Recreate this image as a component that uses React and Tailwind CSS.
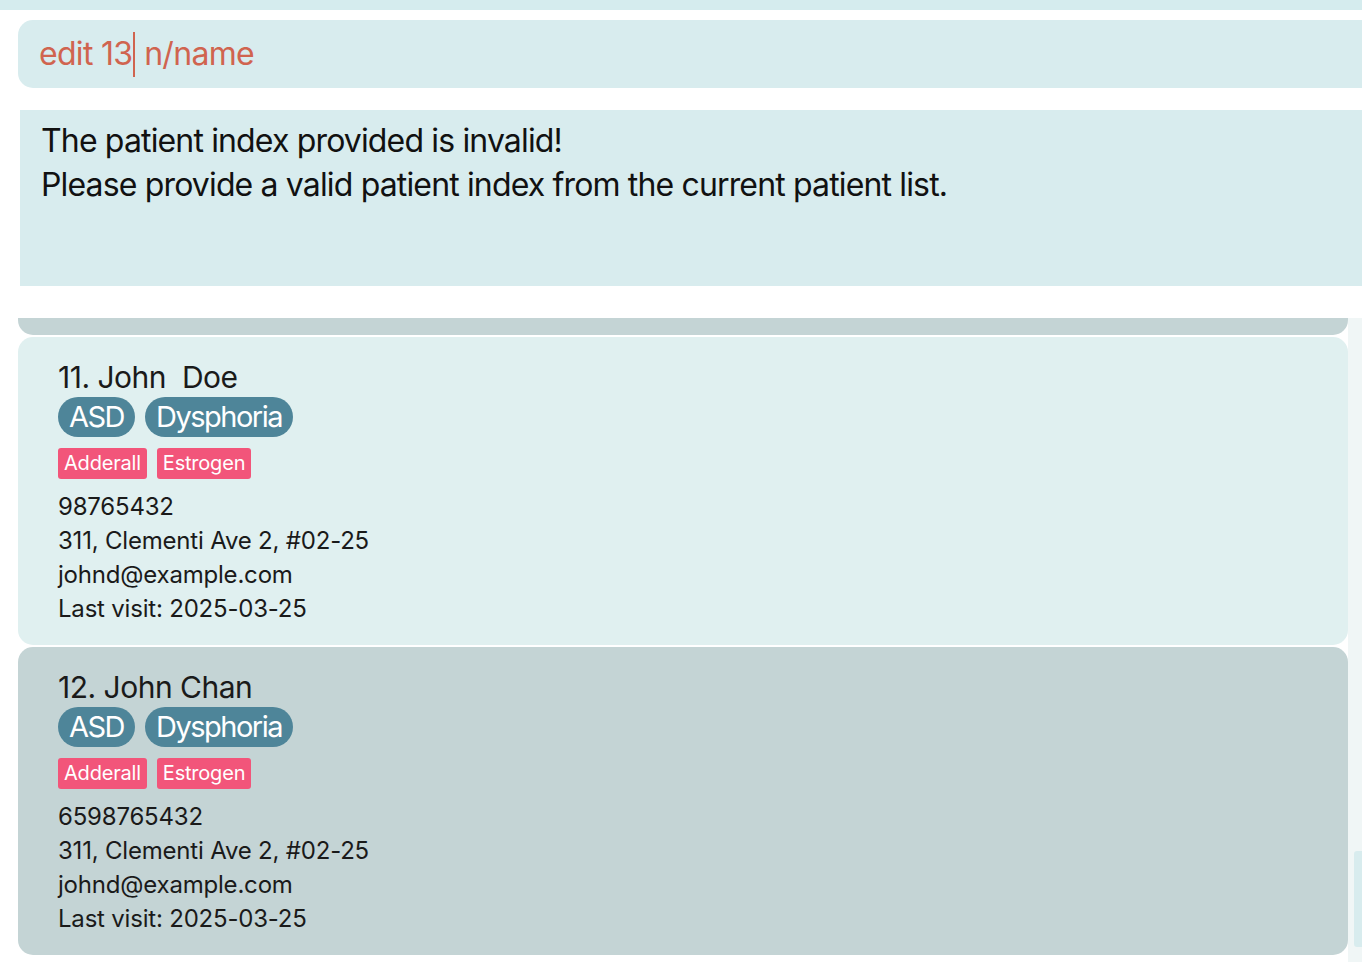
const patients = [
  { idx: 11, name: 'John  Doe', phone: '98765432', selected: false },
  { idx: 12, name: 'John Chan', phone: '6598765432', selected: true },
];

function PatientCard({ p }) {
  return (
    <div
      className={`rounded-[15px] pl-10 pt-[22px] pb-[19px] ${p.selected ? 'bg-[#c4d4d5]' : 'bg-[#e0f0f0]'}`}
    >
      <div className="text-[30px] leading-[36px] text-[#1a1a1a] whitespace-pre tracking-[-0.5px]">{p.idx}. {p.name}</div>
      <div className="flex gap-[10px] mt-[2px]">
        {['ASD', 'Dysphoria'].map(t => (
          <span key={t} className="h-10 px-[11px] rounded-full bg-[#4e8599] text-white text-[29px] leading-[40px] tracking-[-1.5px]">{t}</span>
        ))}
      </div>
      <div className="flex gap-[10px] mt-[11px]">
        {['Adderall', 'Estrogen'].map(t => (
          <span key={t} className="h-[31px] px-[6px] rounded-[3px] bg-[#f2557a] text-white text-[20px] leading-[31px] tracking-[-0.2px]">{t}</span>
        ))}
      </div>
      <div className="mt-[11px] text-[24px] leading-[34px] text-[#1a1a1a] tracking-[-0.2px]">
        <div>{p.phone}</div>
        <div>311, Clementi Ave 2, #02-25</div>
        <div>johnd@example.com</div>
        <div>Last visit: 2025-03-25</div>
      </div>
    </div>
  );
}

export default function App() {
  return (
    <div className="w-[1362px] h-[962px] overflow-hidden bg-white font-['Inter',sans-serif]">
      <div className="h-[10px] bg-[#d5ecee]" />
      <div className="mt-[10px] ml-[18px] h-[68px] rounded-l-[15px] bg-[#d8ecee] flex items-center pl-[21px] text-[32px] text-[#d0644f] tracking-[-0.7px] whitespace-pre">
        <span>edit 13</span>
        <span className="inline-block w-[1.5px] h-[45px] bg-[#d0644f] mx-[1px]" />
        <span> n/name</span>
      </div>
      <div className="mt-[22px] ml-5 h-[176px] bg-[#d8ecee] pl-[21px] pt-[9px] text-[32px] leading-[44px] text-[#111] tracking-[-0.85px]">
        <div>The patient index provided is invalid!</div>
        <div>Please provide a valid patient index from the current patient list.</div>
      </div>
      <div className="mt-8 flex h-[644px]">
        <div className="ml-[18px] w-[1330px] flex flex-col gap-[2px]">
          <div className="h-[17px] shrink-0 rounded-b-[15px] bg-[#c4d4d5]" />
          {patients.map(p => <PatientCard key={p.idx} p={p} />)}
        </div>
        <div className="w-[14px] bg-[#f0f6f6] relative">
          <div className="absolute left-[6px] top-[533px] w-[8px] h-[96px] rounded-l-[3px] bg-[#d8ecee]" />
        </div>
      </div>
    </div>
  );
}
